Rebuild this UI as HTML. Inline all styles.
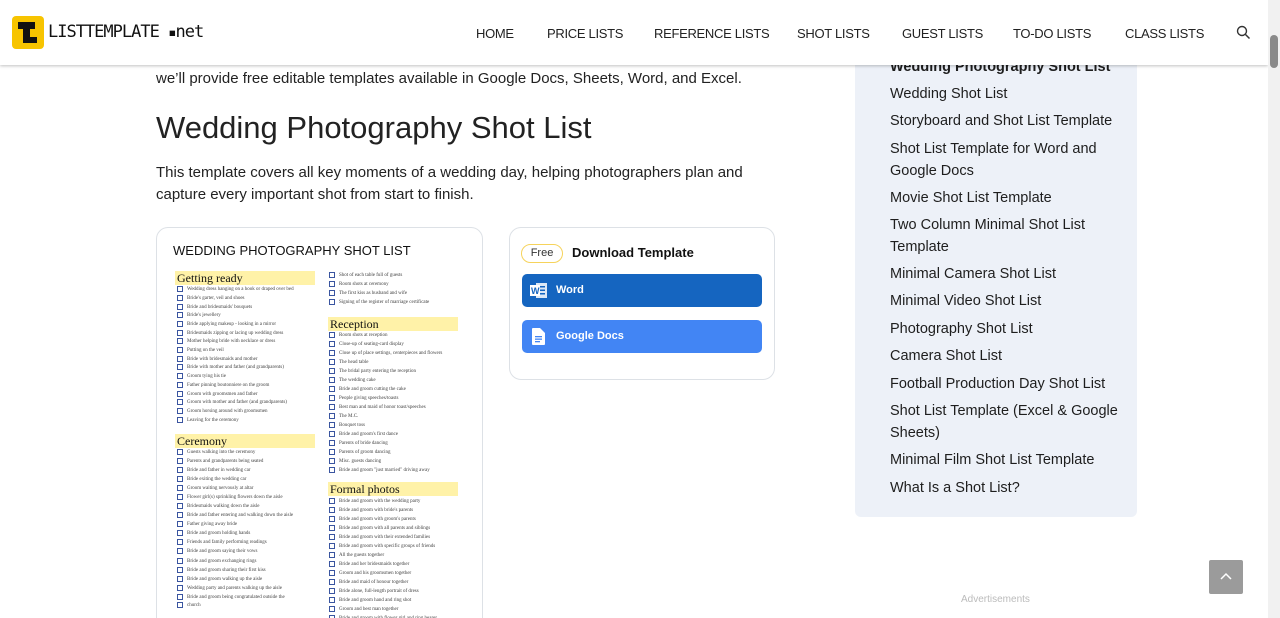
<!DOCTYPE html>
<html style="overflow:hidden;height:618px"><head><meta charset="utf-8">
<style>
*{margin:0;padding:0;box-sizing:border-box}
body{width:1280px;height:618px;overflow:hidden;background:#fff;font-family:"Liberation Sans","DejaVu Sans",sans-serif;color:#1f1f1f;position:relative}
.hdr{position:absolute;left:0;top:0;width:1268px;height:65px;background:#fff;box-shadow:0 1px 3px rgba(0,0,0,.25);z-index:5}
.logo{position:absolute;left:12px;top:16px;width:32px;height:33px;background:#f7c400;border-radius:4px}
.logotxt{position:absolute;left:48px;top:22px;font-size:17px;font-family:"DejaVu Sans Mono","Liberation Mono",monospace;letter-spacing:-1px;color:#111}
.nav{position:absolute;top:26px;font-size:13px;color:#222;letter-spacing:-.3px}
.sb{position:absolute;right:0;top:0;width:12px;height:618px;background:#f1f1f1;z-index:6}
.sb .th{position:absolute;left:2px;top:35px;width:8px;height:33px;background:#8a8a8a;border-radius:4px}
.main p{position:absolute;left:156px;font-size:15px;line-height:22px;color:#222}
h2{position:absolute;left:156px;top:110px;font-size:31px;font-weight:400;color:#222}
.card{position:absolute;border:1px solid #dde1e6;border-radius:12px;background:#fff}
.doc{font-family:"Liberation Serif",serif}
.doc .h{position:absolute;background:#fff2a8;font-size:12px;height:14px;line-height:14px;padding-left:2px;color:#111}
.doc .i{position:absolute;font-size:5px;line-height:5px;color:#444;white-space:nowrap}
.doc .i:before{content:"";display:inline-block;width:4px;height:4px;border:1px solid #3a55a0;margin-right:4px;vertical-align:middle}
.btn{position:absolute;left:12px;width:240px;height:33px;border-radius:5px;color:#fff;font-weight:bold;font-size:11px;line-height:33px;padding-left:34px}
.side{position:absolute;left:855px;top:50px;width:282px;height:467px;background:#edf1f8;border-radius:0 0 6px 6px}
.side div{position:absolute;left:35px;font-size:14.5px;color:#1e1e1e;line-height:21.5px;width:240px}
</style></head><body>
<div class="hdr">
<div class="logo"><div style="position:absolute;left:6px;top:6px;width:17px;height:7px;background:#111"></div><div style="position:absolute;left:11px;top:6px;width:7px;height:21px;background:#111"></div><div style="position:absolute;left:11px;top:21px;width:14px;height:6px;background:#111"></div></div>
<div class="logotxt">LISTTEMPLATE <span style="font-size:14px">▪</span>net</div>
<div class="nav" style="left:476px">HOME</div>
<div class="nav" style="left:547px">PRICE LISTS</div>
<div class="nav" style="left:654px">REFERENCE LISTS</div>
<div class="nav" style="left:797px">SHOT LISTS</div>
<div class="nav" style="left:902px">GUEST LISTS</div>
<div class="nav" style="left:1013px">TO-DO LISTS</div>
<div class="nav" style="left:1125px">CLASS LISTS</div>
<svg style="position:absolute;left:1236px;top:25px" width="15" height="15" viewBox="0 0 15 15"><circle cx="6" cy="6" r="4.5" fill="none" stroke="#333" stroke-width="1.4"/><line x1="9.5" y1="9.5" x2="13.5" y2="13.5" stroke="#333" stroke-width="1.5"/></svg>
</div>
<div class="sb"><div class="th"></div></div>

<div class="main">
<p style="top:68px">we’ll provide free editable templates available in Google Docs, Sheets, Word, and Excel.</p>
<h2>Wedding Photography Shot List</h2>
<p style="top:162px">This template covers all key moments of a wedding day, helping photographers plan and<br>capture every important shot from start to finish.</p>
</div>

<div class="card doc" style="left:156px;top:227px;width:327px;height:420px">
<div style="position:absolute;left:16px;top:15px;font-family:'Liberation Sans',sans-serif;font-size:13px;color:#111">WEDDING PHOTOGRAPHY SHOT LIST</div>
<div class="h" style="left:18px;top:43px;width:140px">Getting ready</div>
<div class="i" style="left:20px;top:58px">Wedding dress hanging on a hook or draped over bed</div>
<div class="i" style="left:20px;top:67px">Bride's garter, veil and shoes</div>
<div class="i" style="left:20px;top:76px">Bride and bridesmaids' bouquets</div>
<div class="i" style="left:20px;top:84px">Bride's jewellery</div>
<div class="i" style="left:20px;top:93px">Bride applying makeup - looking in a mirror</div>
<div class="i" style="left:20px;top:102px">Bridesmaids zipping or lacing up wedding dress</div>
<div class="i" style="left:20px;top:110px">Mother helping bride with necklace or dress</div>
<div class="i" style="left:20px;top:119px">Putting on the veil</div>
<div class="i" style="left:20px;top:128px">Bride with bridesmaids and mother</div>
<div class="i" style="left:20px;top:136px">Bride with mother and father (and grandparents)</div>
<div class="i" style="left:20px;top:145px">Groom tying his tie</div>
<div class="i" style="left:20px;top:154px">Father pinning boutonniere on the groom</div>
<div class="i" style="left:20px;top:163px">Groom with groomsmen and father</div>
<div class="i" style="left:20px;top:171px">Groom with mother and father (and grandparents)</div>
<div class="i" style="left:20px;top:180px">Groom horsing around with groomsmen</div>
<div class="i" style="left:20px;top:189px">Leaving for the ceremony</div>
<div class="h" style="left:18px;top:206px;width:140px">Ceremony</div>
<div class="i" style="left:20px;top:221px">Guests walking into the ceremony</div>
<div class="i" style="left:20px;top:230px">Parents and grandparents being seated</div>
<div class="i" style="left:20px;top:239px">Bride and father in wedding car</div>
<div class="i" style="left:20px;top:248px">Bride exiting the wedding car</div>
<div class="i" style="left:20px;top:257px">Groom waiting nervously at altar</div>
<div class="i" style="left:20px;top:266px">Flower girl(s) sprinkling flowers down the aisle</div>
<div class="i" style="left:20px;top:275px">Bridesmaids walking down the aisle</div>
<div class="i" style="left:20px;top:284px">Bride and father entering and walking down the aisle</div>
<div class="i" style="left:20px;top:293px">Father giving away bride</div>
<div class="i" style="left:20px;top:302px">Bride and groom holding hands</div>
<div class="i" style="left:20px;top:311px">Friends and family performing readings</div>
<div class="i" style="left:20px;top:320px">Bride and groom saying their vows</div>
<div class="i" style="left:20px;top:330px">Bride and groom exchanging rings</div>
<div class="i" style="left:20px;top:339px">Bride and groom sharing their first kiss</div>
<div class="i" style="left:20px;top:348px">Bride and groom walking up the aisle</div>
<div class="i" style="left:20px;top:357px">Wedding party and parents walking up the aisle</div>
<div class="i" style="left:20px;top:366px">Bride and groom being congratulated outside the</div>
<div class="i" style="left:20px;top:374px">church</div>
<div class="i" style="left:172px;top:44px">Shot of each table full of guests</div>
<div class="i" style="left:172px;top:53px">Room shots at ceremony</div>
<div class="i" style="left:172px;top:62px">The first kiss as husband and wife</div>
<div class="i" style="left:172px;top:71px">Signing of the register of marriage certificate</div>
<div class="h" style="left:171px;top:89px;width:130px">Reception</div>
<div class="i" style="left:172px;top:104px">Room shots at reception</div>
<div class="i" style="left:172px;top:113px">Close-up of seating-card display</div>
<div class="i" style="left:172px;top:122px">Close up of place settings, centerpieces and flowers</div>
<div class="i" style="left:172px;top:131px">The head table</div>
<div class="i" style="left:172px;top:140px">The bridal party entering the reception</div>
<div class="i" style="left:172px;top:149px">The wedding cake</div>
<div class="i" style="left:172px;top:158px">Bride and groom cutting the cake</div>
<div class="i" style="left:172px;top:167px">People giving speeches/toasts</div>
<div class="i" style="left:172px;top:176px">Best man and maid of honor toast/speeches</div>
<div class="i" style="left:172px;top:185px">The M.C.</div>
<div class="i" style="left:172px;top:194px">Bouquet toss</div>
<div class="i" style="left:172px;top:203px">Bride and groom's first dance</div>
<div class="i" style="left:172px;top:212px">Parents of bride dancing</div>
<div class="i" style="left:172px;top:221px">Parents of groom dancing</div>
<div class="i" style="left:172px;top:230px">Misc. guests dancing</div>
<div class="i" style="left:172px;top:239px">Bride and groom "just married" driving away</div>
<div class="h" style="left:171px;top:254px;width:130px">Formal photos</div>
<div class="i" style="left:172px;top:270px">Bride and groom with the wedding party</div>
<div class="i" style="left:172px;top:279px">Bride and groom with bride's parents</div>
<div class="i" style="left:172px;top:288px">Bride and groom with groom's parents</div>
<div class="i" style="left:172px;top:297px">Bride and groom with all parents and siblings</div>
<div class="i" style="left:172px;top:306px">Bride and groom with their extended families</div>
<div class="i" style="left:172px;top:315px">Bride and groom with specific groups of friends</div>
<div class="i" style="left:172px;top:324px">All the guests together</div>
<div class="i" style="left:172px;top:333px">Bride and her bridesmaids together</div>
<div class="i" style="left:172px;top:342px">Groom and his groomsmen together</div>
<div class="i" style="left:172px;top:351px">Bride and maid of honour together</div>
<div class="i" style="left:172px;top:360px">Bride alone, full-length portrait of dress</div>
<div class="i" style="left:172px;top:369px">Bride and groom hand and ring shot</div>
<div class="i" style="left:172px;top:378px">Groom and best man together</div>
<div class="i" style="left:172px;top:387px">Bride and groom with flower girl and ring bearer</div>
</div>

<div class="card" style="left:509px;top:227px;width:266px;height:153px">
<div style="position:absolute;left:11px;top:16px;width:42px;height:19px;border:1.5px solid #f6d35b;border-radius:10px;font-size:11px;line-height:16px;text-align:center;color:#333">Free</div>
<div style="position:absolute;left:62px;top:17px;font-size:13px;font-weight:bold;color:#111">Download Template</div>
<div class="btn" style="top:46px;background:#1565c0">Word
<svg style="position:absolute;left:8px;top:8px" width="18" height="17" viewBox="0 0 18 17"><rect x="6" y="1" width="11" height="15" fill="#fff" opacity=".85"/><rect x="8" y="4" width="7" height="1.5" fill="#1565c0"/><rect x="8" y="7.5" width="7" height="1.5" fill="#1565c0"/><rect x="8" y="11" width="7" height="1.5" fill="#1565c0"/><rect x="0" y="3" width="10" height="11" fill="#fff"/><text x="1" y="12" font-size="9" font-weight="bold" fill="#1565c0" font-family="Liberation Sans">W</text></svg></div>
<div class="btn" style="top:92px;background:#4285f4">Google Docs
<svg style="position:absolute;left:10px;top:8px" width="13" height="17" viewBox="0 0 13 17"><path d="M0 1Q0 0 1 0H8L13 5V16Q13 17 12 17H1Q0 17 0 16Z" fill="#fff"/><rect x="3" y="8" width="7" height="1.3" fill="#4285f4"/><rect x="3" y="10.5" width="7" height="1.3" fill="#4285f4"/><rect x="3" y="13" width="5" height="1.3" fill="#4285f4"/></svg></div>
</div>

<div class="side">
<div style="top:7px;font-weight:bold">Wedding Photography Shot List</div>
<div style="top:34px">Wedding Shot List</div>
<div style="top:61px">Storyboard and Shot List Template</div>
<div style="top:89px">Shot List Template for Word and Google Docs</div>
<div style="top:138px">Movie Shot List Template</div>
<div style="top:165px">Two Column Minimal Shot List Template</div>
<div style="top:214px">Minimal Camera Shot List</div>
<div style="top:241px">Minimal Video Shot List</div>
<div style="top:269px">Photography Shot List</div>
<div style="top:296px">Camera Shot List</div>
<div style="top:324px">Football Production Day Shot List</div>
<div style="top:351px">Shot List Template (Excel &amp; Google Sheets)</div>
<div style="top:400px">Minimal Film Shot List Template</div>
<div style="top:428px">What Is a Shot List?</div>
</div>

<div style="position:absolute;left:961px;top:594px;font-size:10px;color:#bbb">Advertisements</div>
<div style="position:absolute;left:1209px;top:560px;width:34px;height:34px;background:#9b9b9b;border-radius:2px">
<svg style="position:absolute;left:11px;top:12px" width="12" height="8" viewBox="0 0 12 8"><path d="M1 7L6 2L11 7" fill="none" stroke="#fff" stroke-width="1.5"/></svg></div>
</body></html>
